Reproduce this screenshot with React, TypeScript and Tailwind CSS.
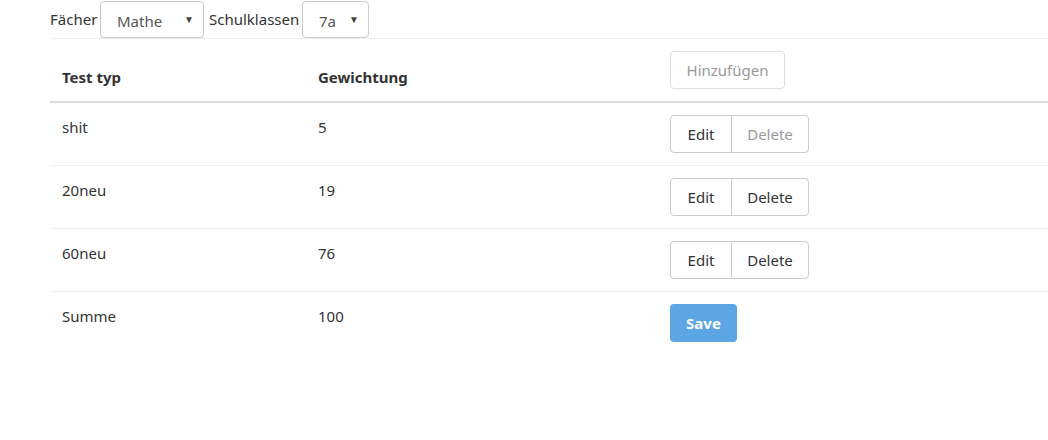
import React from 'react';

type Row = { typ: string; weight: string; deleteDisabled?: boolean };

const rows: Row[] = [
  { typ: 'shit', weight: '5', deleteDisabled: true },
  { typ: '20neu', weight: '19' },
  { typ: '60neu', weight: '76' },
];

const Select: React.FC<{ value: string; width: string; textPad: string }> = ({ value, width, textPad }) => (
  <div
    className={`flex h-[37px] items-center justify-between rounded-[4px] border border-[#cccccc] bg-white ${width} ${textPad} pr-[9px] text-[#555555]`}
  >
    <span className="pt-[4px]">{value}</span>
    <span className="text-[10px] text-[#444]">▼</span>
  </div>
);

const App: React.FC = () => {
  return (
    <div className="min-h-[440px] bg-white pl-[50px] text-[15px] text-[#333333] [font-family:'Noto_Sans',sans-serif]">
      {/* Filter bar */}
      <div className="flex h-[38px] items-center pt-[1px]">
        <span className="w-[50px]">Fächer</span>
        <Select value="Mathe" width="w-[104px]" textPad="pl-[16px]" />
        <span className="w-[98px] pl-[5px]">Schulklassen</span>
        <Select value="7a" width="w-[67px]" textPad="pl-[16px]" />
      </div>

      <table className="w-full table-fixed border-collapse">
        <colgroup>
          <col className="w-[256px]" />
          <col className="w-[352px]" />
          <col />
        </colgroup>
        <thead>
          <tr className="border-t border-b-2 border-t-[#eeeeee] border-b-[#dddddd]">
            <th className="h-[63px] px-[12px] pb-[13px] text-left align-bottom font-bold">Test typ</th>
            <th className="px-[12px] pb-[13px] text-left align-bottom font-bold">Gewichtung</th>
            <th className="px-[12px] py-[12px] text-left align-top font-normal">
              <button
                disabled
                className="h-[38px] w-[115px] rounded-[4px] border border-[#dddddd] bg-white text-[#999999]"
              >
                Hinzufügen
              </button>
            </th>
          </tr>
        </thead>
        <tbody>
          {rows.map((r) => (
            <tr key={r.typ} className="border-b border-[#eeeeee]">
              <td className="h-[62px] px-[12px] pt-[13px] align-top">{r.typ}</td>
              <td className="px-[12px] pt-[13px] align-top">{r.weight}</td>
              <td className="px-[12px] py-[12px] align-top">
                <div className="flex">
                  <button className="h-[38px] w-[62px] rounded-l-[4px] border border-[#cccccc] bg-white text-[#333333]">
                    Edit
                  </button>
                  <button
                    className={`-ml-px h-[38px] w-[78px] rounded-r-[4px] border border-[#cccccc] bg-white ${
                      r.deleteDisabled ? 'text-[#999999]' : 'text-[#333333]'
                    }`}
                  >
                    Delete
                  </button>
                </div>
              </td>
            </tr>
          ))}
          <tr>
            <td className="h-[62px] px-[12px] pt-[13px] align-top">Summe</td>
            <td className="px-[12px] pt-[13px] align-top">100</td>
            <td className="px-[12px] py-[12px] align-top">
              <button className="h-[38px] w-[67px] rounded-[4px] bg-[#5ca6e6] font-bold text-white">Save</button>
            </td>
          </tr>
        </tbody>
      </table>
    </div>
  );
};

export default App;
